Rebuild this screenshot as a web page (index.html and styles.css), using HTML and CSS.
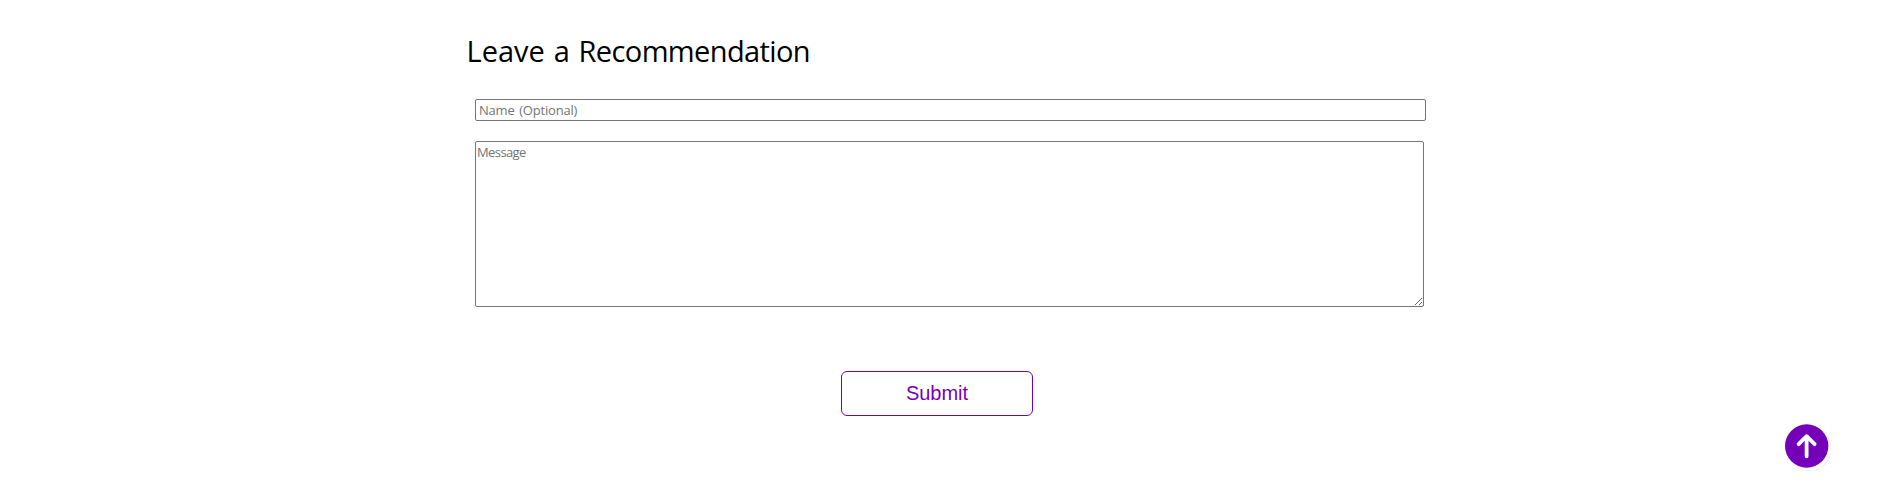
FILE: index.html
```html
<!DOCTYPE html>
<html lang="en">
<head>
<meta charset="utf-8">
<title>Leave a Recommendation</title>
<link rel="stylesheet" href="styles.css">
</head>
<body>
<main class="recommend">
  <h2 class="title">Leave a <span class="title-tight">Recommendation</span></h2>
  <form class="form">
    <input class="field name" type="text" placeholder="Name (Optional)">
    <textarea class="field message" placeholder="Message"></textarea>
    <button class="submit" type="button">Submit</button>
  </form>
</main>
<a class="to-top" href="#" aria-label="Back to top">
  <svg width="48" height="50" viewBox="0 0 48 50">
    <circle cx="24.5" cy="25" r="22" fill="#f0e2f8"/>
    <circle cx="24" cy="24.4" r="22" fill="#fff"/>
    <circle cx="21.7" cy="22" r="21.7" fill="#7500ba"/>
    <path d="M21.6 32.3V12.5M13.6 20.2L21.6 12.2L29.6 20.2" fill="none" stroke="#fff" stroke-width="3.8" stroke-linecap="round" stroke-linejoin="round"/>
  </svg>
</a>
</body>
</html>
```
FILE: styles.css
```css
body {
  margin: 0;
  background: #fff;
  overflow: hidden;
  font-family: "Trebuchet MS", "Open Sans", sans-serif;
}
.recommend {
  width: 960px;
  margin-left: 466px;
  padding-top: 31px;
}
.title {
  margin: 0;
  height: 40px;
  line-height: 40px;
  font-size: 29px;
  font-weight: 400;
  word-spacing: 1.3px;
  text-indent: 0.5px;
  color: #000;
  white-space: nowrap;
}
.title-tight {
  letter-spacing: -0.62px;
}
.form {
  display: flex;
  flex-direction: column;
  align-items: flex-start;
  margin: 28px 0 0 9px;
}
.field {
  box-sizing: border-box;
  margin: 0;
  border: 1px solid #767676;
  border-radius: 2px;
  background: #fff;
  font-family: inherit;
  font-size: 13px;
  outline: none;
}
.field::placeholder {
  color: #757575;
  opacity: 1;
}
.name {
  width: 951px;
  height: 22px;
  padding: 1px 3px;
  letter-spacing: -0.2px;
  word-spacing: 1.5px;
}
.message {
  width: 949px;
  height: 166px;
  margin-top: 20px;
  padding: 2px 2px 2px 1px;
  line-height: 17px;
  letter-spacing: -0.6px;
  resize: vertical;
}
.submit {
  width: 192px;
  height: 45px;
  margin: 64px 0 0 366px;
  padding: 0;
  border: 1px solid #7500ba;
  border-radius: 6px;
  background: #fff;
  color: #7500ba;
  font-family: "Liberation Sans", Arial, sans-serif;
  font-size: 20px;
}
.to-top {
  position: fixed;
  left: 1785px;
  top: 424px;
  line-height: 0;
}
```
